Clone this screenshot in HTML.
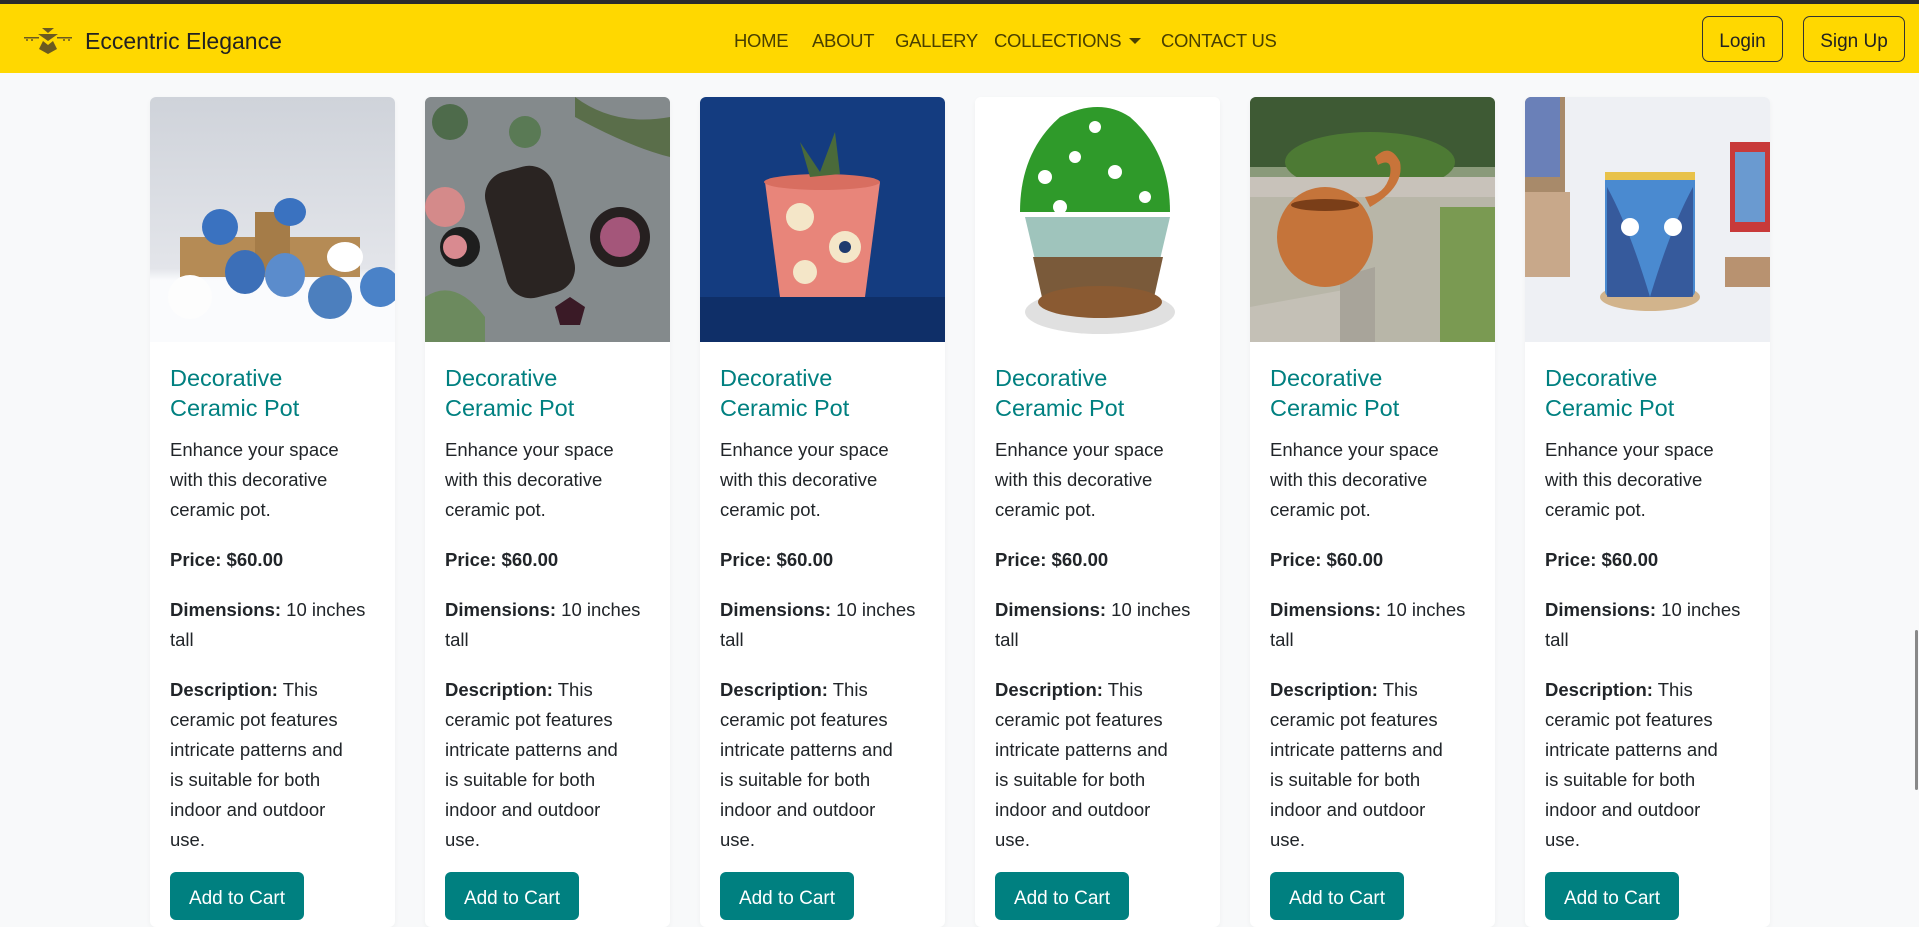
<!DOCTYPE html>
<html><head><meta charset="utf-8"><style>
*{box-sizing:border-box;margin:0;padding:0}
body{width:1919px;height:911px;overflow:hidden;background:#f8f9fa;font-family:"Liberation Sans",sans-serif;color:#212529;position:relative}
.top{position:absolute;left:0;top:0;width:1919px;height:4px;background:#2b2b2b}
.nav{position:absolute;left:0;top:4px;width:1919px;height:69px;background:#ffd800}
.brand{position:absolute;left:85px;top:24px;font-size:23px;color:#222}
.nl{position:absolute;top:26px;font-size:18.5px;color:#4a4000;letter-spacing:-0.3px}
.btn{position:absolute;top:12px;height:46px;border:1.5px solid #333;border-radius:7px;font-size:19px;color:#222;text-align:center;line-height:49px}
.card{position:absolute;top:97px;width:245px;height:830px;background:#fff;border-radius:6px;overflow:hidden;box-shadow:0 2px 6px rgba(0,0,0,.04)}
.card svg{display:block}
.t{position:absolute;left:20px;top:266px;font-size:23.5px;line-height:30px;color:#008080}
.d{position:absolute;left:20px;top:338px;font-size:18.5px;line-height:30px;white-space:nowrap}
.p{position:absolute;left:20px;top:448px;font-weight:bold;font-size:18.5px;line-height:30px}
.dm{position:absolute;left:20px;top:498px;font-size:18.5px;line-height:30px;white-space:nowrap}
.ds{position:absolute;left:20px;top:578px;font-size:18.5px;line-height:30px;white-space:nowrap}
.ac{position:absolute;left:20px;top:775px;width:134px;height:48px;background:#008080;color:#fff;border-radius:6px;font-size:19px;text-align:center;line-height:53px}
.sb{position:absolute;right:1px;top:630px;width:3px;height:160px;background:#888;border-radius:2px}
</style></head><body>
<div class="top"></div>
<div class="nav">
<svg style="position:absolute;left:24px;top:22px" width="48" height="30" viewBox="0 0 48 30"><g fill="#6b5a20"><path d="M18 2h12l-6 5z"/><path d="M14 8h20l-10 7z"/><path d="M19 15l5 4 5-4 4 8-9 5-9-5z"/><rect x="0" y="11" width="15" height="1.5"/><rect x="33" y="11" width="15" height="1.5"/><circle cx="3" cy="14" r="1"/><circle cx="8" cy="14" r="1"/><circle cx="40" cy="14" r="1"/><circle cx="45" cy="14" r="1"/></g></svg>
<div class="brand">Eccentric Elegance</div>
<div class="nl" style="left:734px">HOME</div>
<div class="nl" style="left:812px">ABOUT</div>
<div class="nl" style="left:895px">GALLERY</div>
<div class="nl" style="left:994px">COLLECTIONS</div>
<div style="position:absolute;left:1129px;top:34px;width:0;height:0;border-left:6px solid transparent;border-right:6px solid transparent;border-top:6px solid #4a4000"></div>
<div class="nl" style="left:1161px">CONTACT US</div>
<div class="btn" style="left:1702px;width:81px">Login</div>
<div class="btn" style="left:1803px;width:102px">Sign Up</div>
</div>

<div class="card" style="left:150px">
<svg width="245" height="245"><defs><linearGradient id="g1" x1="0" y1="0" x2="0" y2="1"><stop offset="0" stop-color="#cfd3da"/><stop offset=".7" stop-color="#e3e5ea"/><stop offset=".75" stop-color="#fafbfd"/></linearGradient></defs><rect width="245" height="245" fill="url(#g1)"/><rect x="30" y="140" width="180" height="40" fill="#b58b55"/><rect x="105" y="115" width="35" height="60" fill="#a57c48"/><ellipse cx="70" cy="130" rx="18" ry="18" fill="#3a72c0"/><ellipse cx="140" cy="115" rx="16" ry="14" fill="#3a72c0"/><ellipse cx="95" cy="175" rx="20" ry="22" fill="#3c6fb8"/><ellipse cx="135" cy="178" rx="20" ry="22" fill="#5b8ccc"/><ellipse cx="195" cy="160" rx="18" ry="15" fill="#fff"/><ellipse cx="40" cy="200" rx="22" ry="22" fill="#fdfdfd"/><ellipse cx="180" cy="200" rx="22" ry="22" fill="#4c7fbe"/><ellipse cx="230" cy="190" rx="20" ry="20" fill="#4a82c8"/></svg>
<div class="t">Decorative<br>Ceramic Pot</div>
<div class="d">Enhance your space<br>with this decorative<br>ceramic pot.</div>
<div class="p">Price: $60.00</div>
<div class="dm"><b>Dimensions:</b> 10 inches<br>tall</div>
<div class="ds"><b>Description:</b> This<br>ceramic pot features<br>intricate patterns and<br>is suitable for both<br>indoor and outdoor<br>use.</div>
<div class="ac">Add to Cart</div>
</div>

<div class="card" style="left:425px">
<svg width="245" height="245"><rect width="245" height="245" fill="#7f8587"/><rect x="0" y="0" width="245" height="245" fill="#8a9091" opacity=".5"/><circle cx="25" cy="25" r="18" fill="#4e6b4b"/><circle cx="100" cy="35" r="16" fill="#5a7a55"/><circle cx="20" cy="110" r="20" fill="#d48a8a"/><circle cx="35" cy="150" r="20" fill="#1e1e1e"/><circle cx="30" cy="150" r="12" fill="#d98a90"/><rect x="70" y="70" width="70" height="130" rx="25" fill="#2a2422" transform="rotate(-15 105 135)"/><circle cx="195" cy="140" r="30" fill="#262020"/><circle cx="195" cy="140" r="20" fill="#a4567a"/><path d="M130 210l15-10 15 10-5 18-20 0z" fill="#3a1a26"/><path d="M150 0q40 30 95 20v40q-40-10-95-40z" fill="#5a6e4a"/><path d="M0 200q30-20 60 20v25H0z" fill="#6c8a5e"/></svg>
<div class="t">Decorative<br>Ceramic Pot</div>
<div class="d">Enhance your space<br>with this decorative<br>ceramic pot.</div>
<div class="p">Price: $60.00</div>
<div class="dm"><b>Dimensions:</b> 10 inches<br>tall</div>
<div class="ds"><b>Description:</b> This<br>ceramic pot features<br>intricate patterns and<br>is suitable for both<br>indoor and outdoor<br>use.</div>
<div class="ac">Add to Cart</div>
</div>

<div class="card" style="left:700px">
<svg width="245" height="245"><rect width="245" height="245" fill="#143c80"/><rect y="200" width="245" height="45" fill="#0f2f68"/><path d="M65 85h115l-15 115h-85z" fill="#e8857a"/><ellipse cx="122" cy="85" rx="58" ry="8" fill="#d86e60"/><circle cx="100" cy="120" r="14" fill="#f4e6c8"/><circle cx="145" cy="150" r="16" fill="#f4e6c8"/><circle cx="145" cy="150" r="6" fill="#1e3a6e"/><circle cx="105" cy="175" r="12" fill="#f4e6c8"/><path d="M110 80l-10-35 20 30 15-40 5 42z" fill="#4a6a3a"/></svg>
<div class="t">Decorative<br>Ceramic Pot</div>
<div class="d">Enhance your space<br>with this decorative<br>ceramic pot.</div>
<div class="p">Price: $60.00</div>
<div class="dm"><b>Dimensions:</b> 10 inches<br>tall</div>
<div class="ds"><b>Description:</b> This<br>ceramic pot features<br>intricate patterns and<br>is suitable for both<br>indoor and outdoor<br>use.</div>
<div class="ac">Add to Cart</div>
</div>

<div class="card" style="left:975px">
<svg width="245" height="245"><rect width="245" height="245" fill="#fff"/><ellipse cx="125" cy="215" rx="75" ry="22" fill="#ccc" opacity=".6"/><path d="M50 120h145l-20 85h-105z" fill="#9fc4bc"/><path d="M58 160h130l-10 45h-110z" fill="#7a5a3a"/><ellipse cx="125" cy="205" rx="62" ry="16" fill="#8a5a32"/><path d="M45 115q0-60 40-95 40-20 70 0 40 35 40 95z" fill="#2f9a2a"/><circle cx="70" cy="80" r="7" fill="#fff"/><circle cx="100" cy="60" r="6" fill="#fff"/><circle cx="140" cy="75" r="7" fill="#fff"/><circle cx="170" cy="100" r="6" fill="#fff"/><circle cx="85" cy="110" r="7" fill="#fff"/><circle cx="120" cy="30" r="6" fill="#fff"/></svg>
<div class="t">Decorative<br>Ceramic Pot</div>
<div class="d">Enhance your space<br>with this decorative<br>ceramic pot.</div>
<div class="p">Price: $60.00</div>
<div class="dm"><b>Dimensions:</b> 10 inches<br>tall</div>
<div class="ds"><b>Description:</b> This<br>ceramic pot features<br>intricate patterns and<br>is suitable for both<br>indoor and outdoor<br>use.</div>
<div class="ac">Add to Cart</div>
</div>

<div class="card" style="left:1250px">
<svg width="245" height="245"><rect width="245" height="245" fill="#8a9a7a"/><rect width="245" height="70" fill="#3e5a34"/><ellipse cx="120" cy="65" rx="85" ry="30" fill="#4d7a34"/><rect y="80" width="245" height="20" fill="#c8c2ba"/><rect y="100" width="245" height="145" fill="#b8b6a8"/><rect x="190" y="110" width="55" height="135" fill="#7a9a52"/><path d="M0 210l110-20 0 55H0z" fill="#c4c0b6"/><path d="M90 180l35-10v75H90z" fill="#a8a49a"/><ellipse cx="75" cy="140" rx="48" ry="50" fill="#c5743a"/><ellipse cx="75" cy="108" rx="34" ry="6" fill="#7a3e18"/><path d="M120 110q35-20 30-45-10-20-25-5l3 8q15-8 12 10-5 20-25 22z" fill="#c8743a"/></svg>
<div class="t">Decorative<br>Ceramic Pot</div>
<div class="d">Enhance your space<br>with this decorative<br>ceramic pot.</div>
<div class="p">Price: $60.00</div>
<div class="dm"><b>Dimensions:</b> 10 inches<br>tall</div>
<div class="ds"><b>Description:</b> This<br>ceramic pot features<br>intricate patterns and<br>is suitable for both<br>indoor and outdoor<br>use.</div>
<div class="ac">Add to Cart</div>
</div>

<div class="card" style="left:1525px">
<svg width="245" height="245"><rect width="245" height="245" fill="#eef0f4"/><rect x="0" y="0" width="40" height="95" fill="#a88a6a"/><rect x="0" y="0" width="35" height="80" fill="#6a80b8"/><rect x="0" y="95" width="45" height="85" fill="#c8a88a"/><rect x="205" y="45" width="40" height="90" fill="#c83a3a"/><rect x="210" y="55" width="30" height="70" fill="#6a9ad0"/><rect x="200" y="160" width="45" height="30" fill="#b89270"/><ellipse cx="125" cy="200" rx="50" ry="14" fill="#d2b48c"/><rect x="80" y="75" width="90" height="125" rx="6" fill="#4a8ad0"/><rect x="80" y="75" width="90" height="8" fill="#e8c24a"/><path d="M82 90q22 40 43 110 21-70 43-110v110H82z" fill="#2a3a7a" opacity=".6"/><circle cx="105" cy="130" r="9" fill="#fff"/><circle cx="148" cy="130" r="9" fill="#fff"/></svg>
<div class="t">Decorative<br>Ceramic Pot</div>
<div class="d">Enhance your space<br>with this decorative<br>ceramic pot.</div>
<div class="p">Price: $60.00</div>
<div class="dm"><b>Dimensions:</b> 10 inches<br>tall</div>
<div class="ds"><b>Description:</b> This<br>ceramic pot features<br>intricate patterns and<br>is suitable for both<br>indoor and outdoor<br>use.</div>
<div class="ac">Add to Cart</div>
</div>
<div class="sb"></div>
</body></html>
